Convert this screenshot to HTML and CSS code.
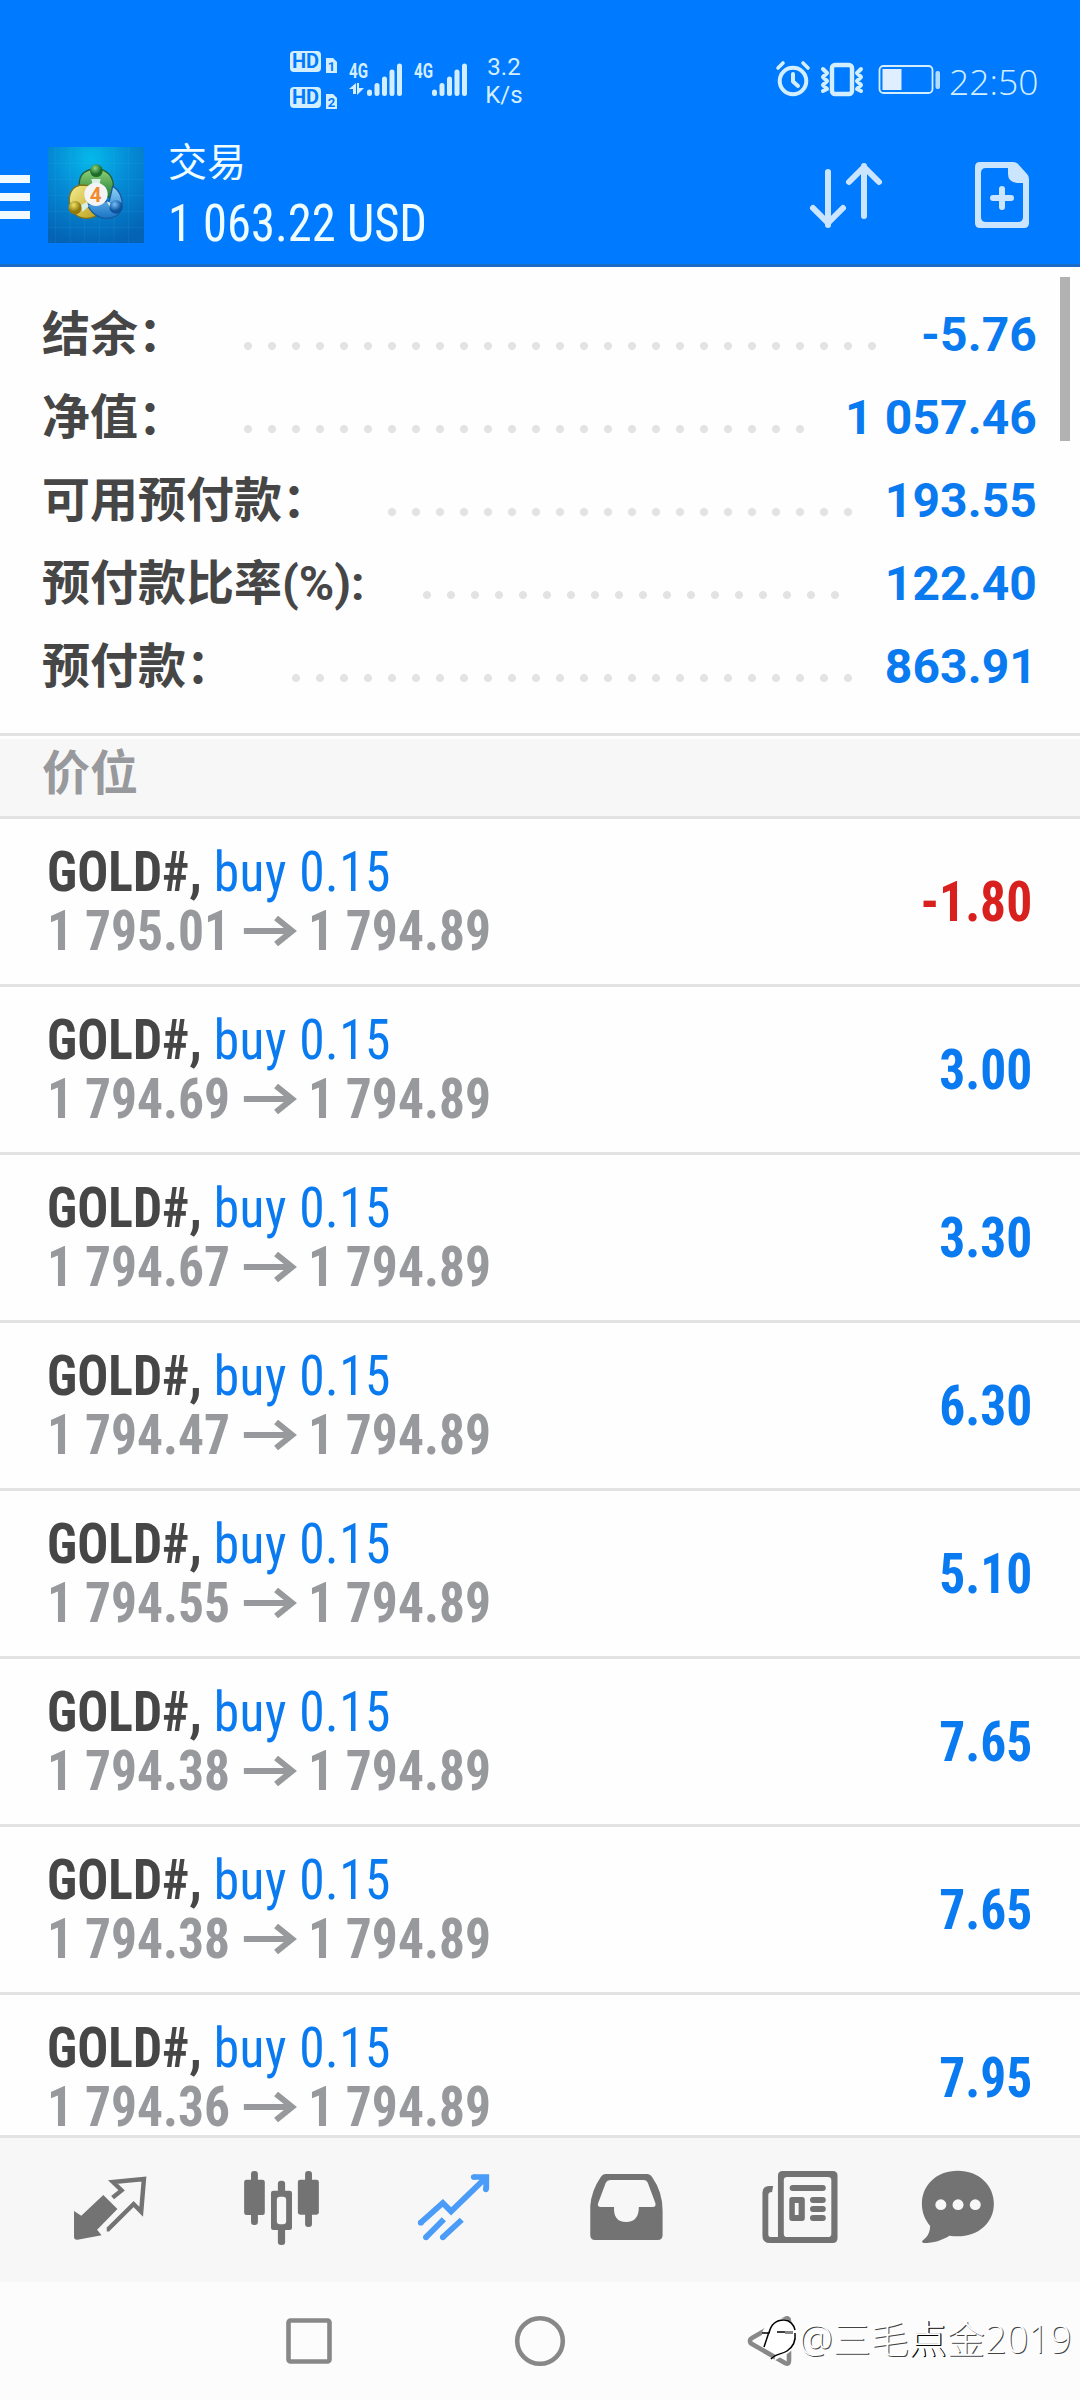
FILE: index.html
```html
<!DOCTYPE html>
<html lang="zh-CN">
<head>
<meta charset="utf-8">
<title>交易</title>
<link rel="stylesheet" href="styles.css">
</head>
<body>
<div class="phone">
  <header class="top">
    <div class="status">
      <svg class="hd" width="56" height="64" viewBox="0 0 56 64">
        <rect x="0" y="3" width="31" height="21" rx="4"/><rect x="0" y="39" width="31" height="21" rx="4"/>
        <path d="M36 10h7l4 4v11h-11zM36 46h7l4 4v11h-11z"/>
        <text class="hd-t" x="15.500" y="20">HD</text><text class="hd-t" x="15.500" y="56">HD</text>
        <text class="sim-t" x="41.500" y="23">1</text><text class="sim-t" x="41.500" y="59">2</text>
      </svg>
      <svg class="signal" width="65" height="40" viewBox="0 0 65 40">
        <text class="net-t" x="2" y="20" textLength="19" lengthAdjust="spacingAndGlyphs">4G</text>
        <path d="M2 31l7-6v11h-3v-5zM12 25v5h5l-7 7v-12z"/>
        <path class="bars" d="M22.500 34v1.500M30 27.500v8M37.500 21v14.500M45 14v21.500M52.500 8v27.500"/>
      </svg>
      <svg class="signal" width="65" height="40" viewBox="0 0 65 40">
        <text class="net-t" x="2" y="20" textLength="19" lengthAdjust="spacingAndGlyphs">4G</text>
        <path class="bars" d="M22.500 34v1.500M30 27.500v8M37.500 21v14.500M45 14v21.500M52.500 8v27.500"/>
      </svg>
      <div class="speed"><span>3.2</span><span>K/s</span></div>
      <svg class="sys" width="170" height="40" viewBox="0 0 170 40">
        <g fill="none" stroke="#d3efff" stroke-linecap="round" stroke-linejoin="round">
          <circle cx="18" cy="21" r="13.300" stroke-width="4"/>
          <path d="M18 14v7.500l5 4.500" stroke-width="4"/>
          <path d="M3 8l5-5M28 3l5 5" stroke-width="3.600"/>
          <rect x="57" y="5" width="20" height="29" rx="3" stroke-width="4.400"/>
          <path d="M48 9l4 4-4 4 4 4-4 4 4 4-4 2M86 9l-4 4 4 4-4 4 4 4-4 4 4 2" stroke-width="4"/>
          <rect x="104.500" y="6" width="53" height="27" rx="4" stroke-width="1.800"/>
        </g>
        <path d="M107.500 9h19v21h-19z" fill="#e0efff"/>
        <rect x="160.500" y="11" width="4.500" height="18" rx="2" fill="#b5dcff"/>
      </svg>
      <time class="clock">22:50</time>
    </div>
    <div class="appbar">
      <svg class="menu" width="30" height="44" viewBox="0 0 30 44"><path d="M0 0h30v8H0zM0 18h30v8H0zM0 36h30v8H0z"/></svg>
      <svg class="logo" width="96" height="96" viewBox="0 0 288 288">
        <defs>
          <radialGradient id="sky" cx=".45" cy=".12" r=".9"><stop offset="0" stop-color="#05b9ea"/><stop offset=".45" stop-color="#058bd6"/><stop offset="1" stop-color="#0463b4"/></radialGradient>
          <linearGradient id="gr" x2="0" y2="1"><stop offset="0" stop-color="#8fd27a"/><stop offset="1" stop-color="#227f35"/></linearGradient>
          <linearGradient id="ye" x2="1" y2="1"><stop offset="0" stop-color="#f6ef93"/><stop offset="1" stop-color="#b89b14"/></linearGradient>
          <linearGradient id="bl" x2="0" y2="1"><stop offset="0" stop-color="#8fd2fb"/><stop offset="1" stop-color="#1873c5"/></linearGradient>
          <radialGradient id="gb" cx=".4" cy=".3"><stop offset="0" stop-color="#8ed57c"/><stop offset="1" stop-color="#1b6b2b"/></radialGradient>
          <radialGradient id="yb" cx=".4" cy=".3"><stop offset="0" stop-color="#f0e568"/><stop offset="1" stop-color="#90780b"/></radialGradient>
          <radialGradient id="bb" cx=".4" cy=".3"><stop offset="0" stop-color="#74c0f5"/><stop offset="1" stop-color="#0c539e"/></radialGradient>
        </defs>
        <path fill="url(#sky)" d="M0 0h288v288H0z"/>
        <path d="M22 0v288M66 0v288M110 0v288M154 0v288M198 0v288M242 0v288M0 50h288M0 98h288M0 146h288M0 194h288M0 242h288" stroke="#49b9ef" stroke-opacity=".2" stroke-width="2"/>
        <path d="M94 116C92 82 112 66 145 66s53 24 51 57l-10 27h-70c-14-8-22-18-22-34z" fill="url(#gr)" stroke="#22602f" stroke-width="4"/>
        <path d="M98 114c-24 4-36 24-34 50 2 30 24 50 50 50 22 0 36-8 44-22l-36-76z" fill="url(#ye)" stroke="#7e7319" stroke-width="4"/>
        <path d="M194 118c22 12 32 40 28 62-6 26-28 36-54 34-26-4-44-24-50-42l66-10z" fill="url(#bl)" stroke="#175a9c" stroke-width="4"/>
        <path d="M130 96h28l-6 26h-16zM96 176l20-12 6 14-18 16zM176 162l20 12-8 12z" fill="#d8efe8"/>
        <circle cx="145" cy="71" r="19" fill="url(#gb)"/>
        <circle cx="81" cy="182" r="20" fill="url(#yb)"/>
        <circle cx="204" cy="180" r="20" fill="url(#bb)"/>
        <circle cx="144" cy="142" r="35" fill="#f4f4f6"/>
        <text x="143" y="164" class="four">4</text>
      </svg>
      <div class="account"><span class="title">交易</span><span class="sum">1 063.22 USD</span></div>
      <svg class="sort" width="76" height="66" viewBox="0 0 76 66"><path d="M20 10v53M5 46l15 15 15-15M56 54V4M41 20L56 5l15 15"/></svg>
      <svg class="neworder" width="54" height="66" viewBox="0 0 54 66">
        <path fill-rule="evenodd" d="M5 0h33q3 0 5 2l9 10q2 2 2 5v44q0 5-5 5H5q-5 0-5-5V5q0-5 5-5zM33 6H11q-5 0-5 5v44q0 5 5 5h32q5 0 5-5V21h-6q-9-1-9-9z"/>
        <path d="M27 27v18M18 36h18" stroke="#cce5ff" stroke-width="6" stroke-linecap="round"/>
      </svg>
    </div>
  </header>
  <main class="body">
    <section class="summary">
      <div class="line"><span class="label">结余：</span><i class="dots" style="--n:27"></i><b class="value">-5.76</b></div>
      <div class="line"><span class="label">净值：</span><i class="dots" style="--n:24"></i><b class="value">1 057.46</b></div>
      <div class="line"><span class="label">可用预付款：</span><i class="dots" style="--n:20"></i><b class="value">193.55</b></div>
      <div class="line"><span class="label">预付款比率(%):</span><i class="dots" style="--n:18"></i><b class="value">122.40</b></div>
      <div class="line"><span class="label">预付款：</span><i class="dots" style="--n:24"></i><b class="value">863.91</b></div>
      <div class="scrollbar"></div>
    </section>
    <h2 class="section">价位</h2>
    <ul class="list" id="list"></ul>
  </main>
  <nav class="tabs">
    <svg viewBox="206.200 204 226.500 240" preserveAspectRatio="none"><path d="M300 285l41 42-59 62 13 17-70 13q-10 1-10-9v-77l21 14z"/><path class="ln" d="M327 293l26-22-25-25 90-9-8 98-22-23-74 76h-4"/></svg>
    <svg viewBox="705.700 204 226.500 240" preserveAspectRatio="none"><rect x="729" y="213" width="20" height="162" rx="9"/><rect x="709" y="239" width="60" height="106" rx="7"/><rect x="886" y="213" width="20" height="168" rx="9"/><rect x="865" y="239" width="61" height="105" rx="7"/><rect x="807" y="242" width="21" height="193" rx="9"/><rect x="787" y="272" width="61" height="118" rx="7"/><rect x="804" y="290" width="27" height="83" rx="9" fill="#f7f7f7"/></svg>
    <svg class="on" viewBox="1205.200 204 226.500 240" preserveAspectRatio="none"><path d="M1222 368l64-59 24 25 100-100M1376 231h36v37M1237 412l52-54M1286 412l55-53" stroke-linejoin="miter"/><path d="M1222 368h.1M1237 412h.1M1286 412h.1M1376 231h.1M1411 268h.1" stroke-linecap="round"/></svg>
    <svg viewBox="139.400 204 226.500 240" preserveAspectRatio="none"><path fill-rule="evenodd" d="M190 222h122q8 0 13 8 31 45 31 102v74q0 14-14 14H160q-14 0-14-14v-88q3-46 31-88 5-8 13-8zM204 240q-9 0-13 8l-22 61q-4 12 8 12h38q-2 45 35 45t37-45h40q11 0 8-12l-22-61q-3-8-11-8z"/></svg>
    <svg viewBox="641.800 204 226.500 240" preserveAspectRatio="none"><path fill-rule="evenodd" d="M705 213h145q14 0 14 14v188q0 14-14 14H668q-22 0-22-22V279q0-21 20-21h11l-3 18q-11 0-11 9v119q0 7 7 7h21V227q0-14 14-14zM718 231q-10 0-10 10v160q0 10 10 10h118q10 0 10-10V241q0-10-10-10z"/><rect x="725" y="255" width="105" height="18" rx="9"/><rect x="784" y="291" width="46" height="18" rx="9"/><rect x="784" y="318" width="46" height="18" rx="9"/><rect x="784" y="345" width="46" height="18" rx="9"/><path fill-rule="evenodd" d="M732 291h29q8 0 8 8v56q0 8-8 8h-29q-8 0-8-8v-56q0-8 8-8zM740 309v36h11v-36z"/></svg>
    <svg viewBox="1100.600 204 226.500 240" preserveAspectRatio="none"><path d="M1213 212c62 0 105 44 105 99 0 65-58 108-129 96-22 14-45 22-75 22-5-1-6-5-2-8 15-12 20-24 21-43-16-21-24-42-24-67 0-55 42-99 104-99z"/><g fill="#f7f7f7"><circle cx="1164" cy="314" r="16"/><circle cx="1214" cy="314" r="16"/><circle cx="1264" cy="314" r="16"/></g></svg>
  </nav>
  <footer class="sysnav">
    <svg width="50" height="54" viewBox="0 0 50 54"><rect x="4.500" y="6.500" width="41" height="41" rx="2"/></svg>
    <svg width="54" height="54" viewBox="0 0 54 54"><circle cx="27" cy="27" r="22.800"/></svg>
    <svg width="50" height="54" viewBox="0 0 50 54"><path d="M5 27q0-2 2-3L40 5q4-2 4 2v40q0 4-4 2L7 30q-2-1-2-3z"/></svg>
    <div class="mark">
      <svg width="37" height="50" viewBox="0 0 37 50"><path class="blob" d="M0 20C4 8 20 1 29 9c8 7 8 21 1 28-6 6-13 7-18 11l2-7C7 37-1 30 0 20z"/><path class="ink" d="M0 20h7c2-9 8-13 15-13 6 0 10 5 11 10M7 19L2 34M15 19h8M33 20c1 8-2 14-8 18-6 4-11 2-16 8"/><path d="M23 18h8v3h-8z" fill="#888"/></svg>
      <span>@三毛<span class="dark">点</span>金2019</span>
    </div>
  </footer>
</div>
<script src="app.js"></script>
</body>
</html>
```
FILE: styles.css
```css
* { box-sizing: border-box; }
body { margin: 0; background: #fff; }
.phone { width: 1080px; height: 2400px; display: flex; flex-direction: column; overflow: hidden; font-family: Roboto, "Noto Sans CJK SC", sans-serif; }
svg { display: block; flex: none; }
.top { height: 267px; flex: none; background: #007aff; border-bottom: 3px solid #1a6cc4; }
.status { height: 132px; padding: 48px 0 0 290px; display: flex; align-items: flex-start; fill: #d3efff; color: #d3efff; }
.hd-t { font: 700 20px Roboto; fill: #007aff; text-anchor: middle; }
.sim-t { font: 700 13px Roboto; fill: #007aff; text-anchor: middle; }
.signal { margin-top: 10px; }
.hd + .signal { margin-left: 1px; }
.net-t { font: 700 21px Roboto; }
.bars { fill: none; stroke: #d3efff; stroke-width: 5; stroke-linecap: round; }
.speed { width: 40px; margin: 5px 0 0 7px; display: flex; flex-direction: column; align-items: center; font-size: 24px; line-height: 28px; }
.sys { margin: 12px 0 0 251px; }
.clock { margin-left: 4px; margin-top: 8px; font: 300 35.500px/50px "Open Sans", sans-serif; white-space: nowrap; }
.appbar { display: flex; align-items: flex-start; padding-top: 15px; fill: #f0faff; }
.menu { margin-top: 28px; }
.logo { margin-left: 18px; }
.four { font: 700 62px Roboto; fill: #f08b30; text-anchor: middle; }
.account { width: 402px; margin-left: 24px; margin-top: -7px; display: flex; flex-direction: column; color: #f0fdff; white-space: nowrap; }
.title { font-size: 39px; line-height: 46px; }
.sum { margin-top: 8px; font-size: 51px; line-height: 60px; font-weight: 430; font-stretch: 75%; font-family: "Roboto Condensed", Roboto, sans-serif; transform: scaleX(.952); transform-origin: left; }
.sort { margin-left: 238px; margin-top: 15px; fill: none; stroke: #cce5ff; stroke-width: 6; stroke-linecap: round; stroke-linejoin: round; }
.neworder { margin-left: 91px; margin-top: 15px; fill: #cce5ff; }
.body { height: 1868px; flex: none; overflow: hidden; background: #fefefe; }
.summary { position: relative; height: 469px; padding: 26px 43px 0 42px; border-bottom: 3px solid #e3e3e3; }
.line { height: 83px; display: flex; align-items: center; }
.label { font-weight: 700; font-size: 48px; line-height: 83px; color: #464646; white-space: nowrap; }
.dots { width: calc(var(--n) * 24px); height: 24px; margin-left: 50px; margin-top: 22px; background: radial-gradient(circle, #e3e3e3 3.600px, transparent 4.400px) 0 0 / 24px 24px repeat-x; }
.value { margin-left: auto; font-size: 48px; line-height: 83px; color: #0a7af0; letter-spacing: .1px; white-space: nowrap; }
.scrollbar { position: absolute; right: 10px; top: 10px; width: 10px; height: 164px; background: #b2b2b2; }
.section { margin: 3px 0 0; height: 80px; padding-left: 42px; background: #f7f7f7; border-bottom: 3px solid #e3e3e3; color: #98999c; font-weight: 700; font-size: 48px; line-height: 69px; }
.list { margin: 0; padding: 0; list-style: none; }
.deal { height: 168px; padding: 0 48px 0 47px; display: flex; align-items: center; justify-content: space-between; border-bottom: 3px solid #e3e3e3; font-family: "Roboto Condensed", Roboto, sans-serif; font-stretch: 75%; font-size: 55px; line-height: 59px; white-space: nowrap; }
.info { transform: scaleX(.937); transform-origin: left; }
.sym { font-weight: 700; color: #464646; }
.side { color: #0a7af0; letter-spacing: .500px; }
.prices { display: flex; align-items: center; font-weight: 700; color: #98999c; }
.arrow { margin: 0 11px 0 14px; fill: none; stroke: #98999c; stroke-width: 6; }
.pl { padding-top: 2px; font-weight: 700; color: #0a7af0; transform: scaleX(.937); transform-origin: right; }
.pl.neg { color: #d8201f; }
.tabs { height: 147px; flex: none; background: #f7f7f7; border-top: 3px solid #e3e3e3; padding: 30px 0 0 71px; display: grid; grid-template-columns: 172px 172px 173px 173px 158px 1fr; fill: #737373; }
.tabs svg { width: 78px; height: 80px; }
.ln { fill: none; stroke: #737373; stroke-width: 13; }
.tabs .on { fill: none; stroke: #4a9cf8; stroke-width: 17; }
.sysnav { position: relative; flex: 1; background: #fcfcfc; padding: 32px 0 0 284px; display: flex; align-items: flex-start; gap: 179px; fill: none; stroke: #888; stroke-width: 4.600; }
.sysnav > svg:nth-child(3) { margin-left: -1px; }
.mark { position: absolute; left: 762px; top: 31px; display: flex; align-items: center; font: 300 38px/50px "Open Sans", "Noto Sans CJK SC", sans-serif; color: #fff; text-shadow: 1px 1px 0 #444; white-space: nowrap; stroke: none; }
.dark { text-shadow: 1px 1px 0 #000, 1px 0 0 #000; }
.blob { fill: #fff; }
.ink { fill: none; stroke: #000; stroke-width: 1.500; }
```
FILE: app.js
```js
const deals = [
  ["1 795.01", "-1.80"], ["1 794.69", "3.00"], ["1 794.67", "3.30"], ["1 794.47", "6.30"],
  ["1 794.55", "5.10"], ["1 794.38", "7.65"], ["1 794.38", "7.65"], ["1 794.36", "7.95"]
];
document.getElementById("list").innerHTML = deals.map(([open, pl]) => `
  <li class="deal">
    <div class="info">
      <div><span class="sym">GOLD#,</span> <span class="side">buy 0.15</span></div>
      <div class="prices"><span>${open}</span><svg class="arrow" width="58" height="30" viewBox="0 0 54 30" preserveAspectRatio="none"><path d="M1 15h49M33 2l16 13-16 13"/></svg><span>1 794.89</span></div>
    </div>
    <span class="pl${pl.startsWith("-") ? " neg" : ""}">${pl}</span>
  </li>`).join("");
```
